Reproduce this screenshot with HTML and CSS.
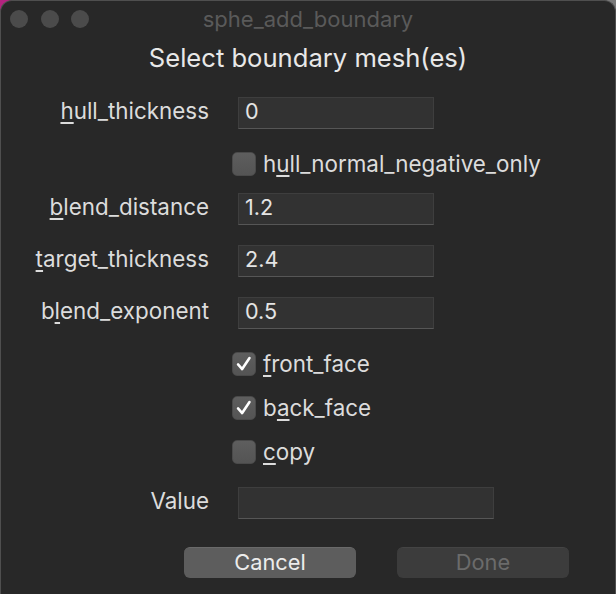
FILE: index.html
```html
<!DOCTYPE html>
<html>
<head>
<meta charset="utf-8">
<link rel="stylesheet" href="styles.css">
</head>
<body>
<div class="window">
  <div class="titlebar">
    <div class="lights"><span class="light"></span><span class="light"></span><span class="light"></span></div>
    <div class="title">sphe_add_boundary</div>
  </div>
  <div class="heading">Select boundary mesh(es)</div>
  <div class="form">
    <div class="row field">
      <label class="label"><u>h</u>ull_thickness</label>
      <div class="input">0</div>
    </div>
    <div class="row check">
      <span class="box"></span>
      <span class="ctext">h<u>u</u>ll_normal_negative_only</span>
    </div>
    <div class="row field">
      <label class="label"><u>b</u>lend_distance</label>
      <div class="input">1.2</div>
    </div>
    <div class="row field">
      <label class="label"><u>t</u>arget_thickness</label>
      <div class="input">2.4</div>
    </div>
    <div class="row field">
      <label class="label">b<u>l</u>end_exponent</label>
      <div class="input">0.5</div>
    </div>
    <div class="row check">
      <span class="box on"><svg viewBox="0 0 24 24" width="24" height="24"><path d="M5.5 12.5 L10 17.5 L18 5.5" fill="none" stroke="#fff" stroke-width="2.8" stroke-linecap="round" stroke-linejoin="round"/></svg></span>
      <span class="ctext"><u>f</u>ront_face</span>
    </div>
    <div class="row check">
      <span class="box on"><svg viewBox="0 0 24 24" width="24" height="24"><path d="M5.5 12.5 L10 17.5 L18 5.5" fill="none" stroke="#fff" stroke-width="2.8" stroke-linecap="round" stroke-linejoin="round"/></svg></span>
      <span class="ctext">b<u>a</u>ck_face</span>
    </div>
    <div class="row check">
      <span class="box"></span>
      <span class="ctext"><u>c</u>opy</span>
    </div>
    <div class="row field value-row">
      <label class="label">Value</label>
      <div class="input wide"></div>
    </div>
    <div class="buttons">
      <div class="btn">Cancel</div>
      <div class="btn disabled">Done</div>
    </div>
  </div>
</div>
</body>
</html>
```

FILE: styles.css
```css
html, body {
  margin: 0;
  padding: 0;
}
body {
  width: 616px;
  height: 594px;
  background: linear-gradient(to right, #b4237f 0%, #b4237f 50%, #7a7a7a 50%, #7a7a7a 100%);
  font-family: Inter, "Noto Sans", sans-serif;
  overflow: hidden;
}
.window {
  width: 616px;
  height: 594px;
  box-sizing: border-box;
  background: #282828;
  border: 1px solid #4f4f4f;
  border-bottom: none;
  border-radius: 12px 12px 0 0;
  color: #dedede;
}
.titlebar {
  height: 36px;
  display: flex;
  align-items: center;
  justify-content: center;
  position: relative;
}
.lights {
  position: absolute;
  left: 9px;
  top: 9px;
  display: flex;
  gap: 12.5px;
}
.light {
  width: 18px;
  height: 18px;
  border-radius: 50%;
  background: #4b4b4b;
}
.title {
  color: #5a5a5a;
  font-size: 22px;
  padding-bottom: 1px;
}
.heading {
  margin-top: 5px;
  height: 32px;
  line-height: 32px;
  text-align: center;
  font-size: 25.6px;
  color: #e8e8e8;
}
.form {
  margin-top: 23px;
  display: flex;
  flex-direction: column;
}
.row {
  display: flex;
  align-items: center;
}
.field {
  height: 32px;
}
.check {
  height: 24px;
  padding-left: 231px;
}
.field + .field { margin-top: 20px; }
.field + .check { margin-top: 23px; }
.check + .check { margin-top: 20px; }
.check + .field { margin-top: 17px; }
.check + .value-row { margin-top: 23px; }
.label {
  width: 208px;
  text-align: right;
  font-size: 22.4px;
  line-height: 28px;
  padding-bottom: 4px;
  color: #dcdcdc;
  flex: none;
}
u {
  text-decoration-thickness: 1.5px;
  text-underline-offset: 3px;
}
.input {
  margin-left: 29px;
  width: 196px;
  height: 32px;
  box-sizing: border-box;
  background: #323232;
  border: 1px solid #3e3e3e;
  border-bottom-color: #565656;
  font-size: 21.6px;
  line-height: 27px;
  padding-left: 6px;
  color: #e4e4e4;
}
.input.wide {
  width: 256px;
}
.box {
  width: 24px;
  height: 24px;
  border-radius: 5px;
  background: linear-gradient(#5e5e5e, #545454);
  box-sizing: border-box;
  border: 1px solid #4a4a4a;
  display: flex;
  align-items: center;
  justify-content: center;
  flex: none;
}
.box svg {
  width: 22px;
  height: 22px;
}
.ctext {
  margin-left: 7px;
  font-size: 22.4px;
  line-height: 24px;
  color: #dcdcdc;
}
.buttons {
  margin-top: 28px;
  display: flex;
  padding-left: 183px;
  gap: 41px;
}
.btn {
  width: 172px;
  height: 31px;
  box-sizing: border-box;
  border-radius: 6px;
  background: #5d5d5d;
  border-top: 1px solid #6a6a6a;
  color: #ececec;
  font-size: 21.8px;
  line-height: 28px;
  text-align: center;
}
.btn.disabled {
  background: #3c3c3c;
  border-top-color: #444;
  color: #6b6b6b;
}
```
